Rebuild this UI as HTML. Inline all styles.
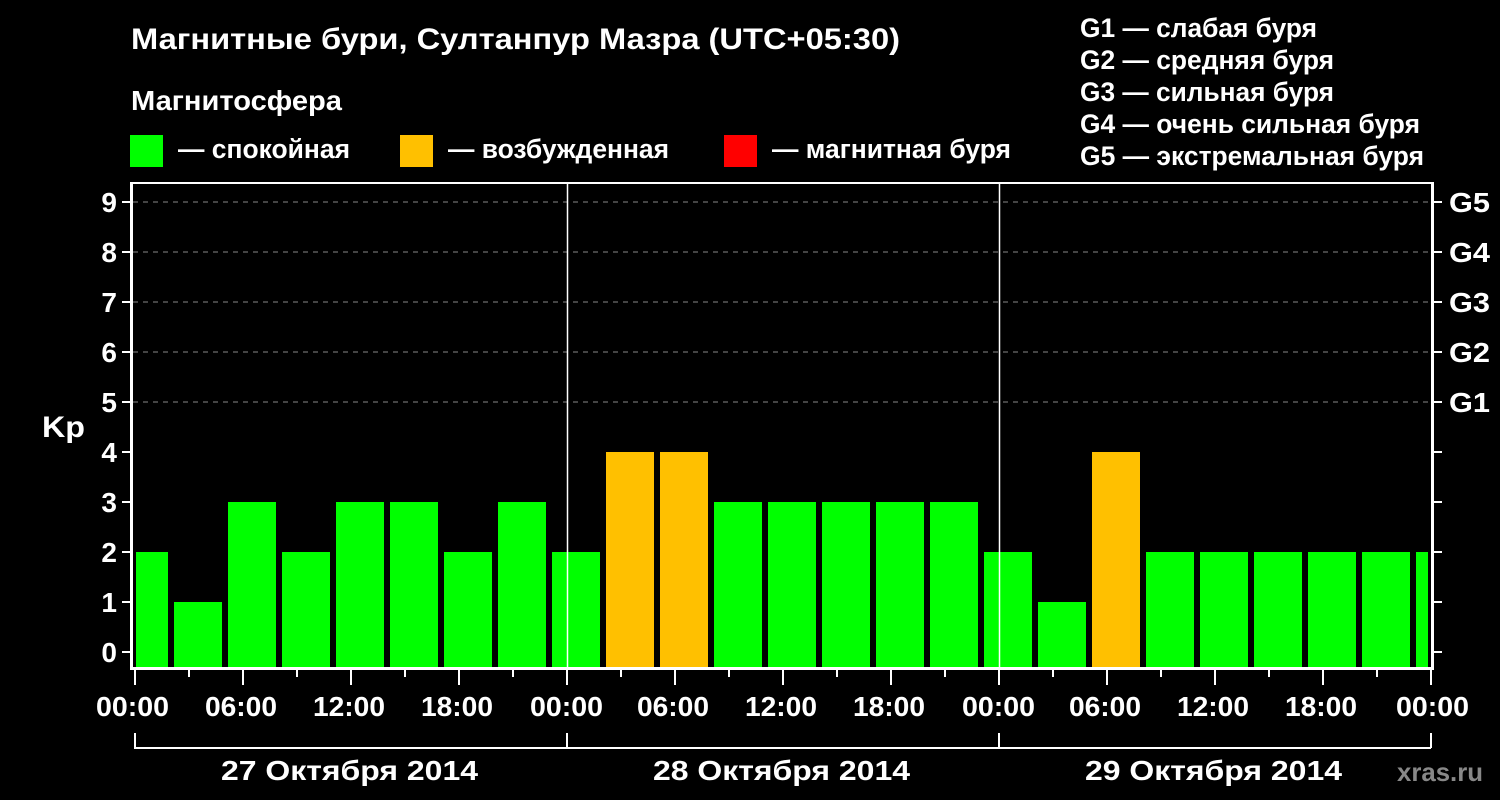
<!DOCTYPE html>
<html><head><meta charset="utf-8"><style>html,body{margin:0;padding:0;background:#000;}svg{display:block}text{font-family:"Liberation Sans",sans-serif;font-weight:bold;fill:#fff}</style></head>
<body>
<svg width="1500" height="800" viewBox="0 0 1500 800" xmlns="http://www.w3.org/2000/svg">
<rect width="1500" height="800" fill="#000"/>
<text x="131" y="49" font-size="30" textLength="769" lengthAdjust="spacingAndGlyphs">Магнитные бури, Султанпур Мазра (UTC+05:30)</text>
<text x="131" y="110" font-size="28" textLength="211" lengthAdjust="spacingAndGlyphs">Магнитосфера</text>
<rect x="130" y="135" width="33" height="32" fill="#00ff00"/>
<text x="178" y="158" font-size="27" textLength="172" lengthAdjust="spacingAndGlyphs">— спокойная</text>
<rect x="400" y="135" width="33" height="32" fill="#ffc000"/>
<text x="448" y="158" font-size="27" textLength="221" lengthAdjust="spacingAndGlyphs">— возбужденная</text>
<rect x="724" y="135" width="33" height="32" fill="#ff0000"/>
<text x="772" y="158" font-size="27" textLength="239" lengthAdjust="spacingAndGlyphs">— магнитная буря</text>
<g font-size="27">
<text x="1080" y="37" textLength="237" lengthAdjust="spacingAndGlyphs">G1 — слабая буря</text>
<text x="1080" y="69" textLength="254" lengthAdjust="spacingAndGlyphs">G2 — средняя буря</text>
<text x="1080" y="101" textLength="254" lengthAdjust="spacingAndGlyphs">G3 — сильная буря</text>
<text x="1080" y="133" textLength="340" lengthAdjust="spacingAndGlyphs">G4 — очень сильная буря</text>
<text x="1080" y="165" textLength="344" lengthAdjust="spacingAndGlyphs">G5 — экстремальная буря</text>
</g>
<g stroke="#888" stroke-width="1" stroke-dasharray="5,5">
<line x1="133" y1="202" x2="1432" y2="202"/><line x1="133" y1="252" x2="1432" y2="252"/><line x1="133" y1="302" x2="1432" y2="302"/><line x1="133" y1="352" x2="1432" y2="352"/><line x1="133" y1="402" x2="1432" y2="402"/>
</g>
<g>
<rect x="136" y="552" width="32" height="116" fill="#00ff00"/>
<rect x="174" y="602" width="48" height="66" fill="#00ff00"/>
<rect x="228" y="502" width="48" height="166" fill="#00ff00"/>
<rect x="282" y="552" width="48" height="116" fill="#00ff00"/>
<rect x="336" y="502" width="48" height="166" fill="#00ff00"/>
<rect x="390" y="502" width="48" height="166" fill="#00ff00"/>
<rect x="444" y="552" width="48" height="116" fill="#00ff00"/>
<rect x="498" y="502" width="48" height="166" fill="#00ff00"/>
<rect x="552" y="552" width="48" height="116" fill="#00ff00"/>
<rect x="606" y="452" width="48" height="216" fill="#ffc000"/>
<rect x="660" y="452" width="48" height="216" fill="#ffc000"/>
<rect x="714" y="502" width="48" height="166" fill="#00ff00"/>
<rect x="768" y="502" width="48" height="166" fill="#00ff00"/>
<rect x="822" y="502" width="48" height="166" fill="#00ff00"/>
<rect x="876" y="502" width="48" height="166" fill="#00ff00"/>
<rect x="930" y="502" width="48" height="166" fill="#00ff00"/>
<rect x="984" y="552" width="48" height="116" fill="#00ff00"/>
<rect x="1038" y="602" width="48" height="66" fill="#00ff00"/>
<rect x="1092" y="452" width="48" height="216" fill="#ffc000"/>
<rect x="1146" y="552" width="48" height="116" fill="#00ff00"/>
<rect x="1200" y="552" width="48" height="116" fill="#00ff00"/>
<rect x="1254" y="552" width="48" height="116" fill="#00ff00"/>
<rect x="1308" y="552" width="48" height="116" fill="#00ff00"/>
<rect x="1362" y="552" width="48" height="116" fill="#00ff00"/>
<rect x="1416" y="552" width="12" height="116" fill="#00ff00"/>
</g>
<g stroke="#fff" fill="none">
<line x1="131" y1="183" x2="1434" y2="183" stroke-width="2"/>
<line x1="131.5" y1="182" x2="131.5" y2="670" stroke-width="3"/>
<line x1="1432.5" y1="182" x2="1432.5" y2="670" stroke-width="3"/>
<line x1="130" y1="668.5" x2="1434" y2="668.5" stroke-width="3"/>
<line x1="567.5" y1="183" x2="567.5" y2="668" stroke-width="1.5"/>
<line x1="999.5" y1="183" x2="999.5" y2="668" stroke-width="1.5"/>
<g stroke-width="2">
<path d="M122 202H131M122 252H131M122 302H131M122 352H131M122 402H131M122 452H131M122 502H131M122 552H131M122 602H131M122 652H131"/>
<path d="M1433 202H1442M1433 252H1442M1433 302H1442M1433 352H1442M1433 402H1442M1433 452H1442M1433 502H1442M1433 552H1442M1433 602H1442M1433 652H1442"/>
<path d="M135 668V685M243 668V685M351 668V685M459 668V685M567 668V685M675 668V685M783 668V685M891 668V685M999 668V685M1107 668V685M1215 668V685M1323 668V685M1431 668V685"/>
<path d="M189 668V677M297 668V677M405 668V677M513 668V677M621 668V677M729 668V677M837 668V677M945 668V677M1053 668V677M1161 668V677M1269 668V677M1377 668V677"/>
<path d="M135 733V748H1431M1431 733V748M567 733V748M999 733V748"/>
</g>
</g>
<g font-size="28" text-anchor="end">
<text x="117" y="212">9</text><text x="117" y="262">8</text><text x="117" y="312">7</text><text x="117" y="362">6</text><text x="117" y="412">5</text><text x="117" y="462">4</text><text x="117" y="512">3</text><text x="117" y="562">2</text><text x="117" y="612">1</text><text x="117" y="662">0</text>
</g>
<text x="42" y="437" font-size="30" textLength="43" lengthAdjust="spacingAndGlyphs">Kp</text>
<g font-size="28">
<text x="1449" y="212" textLength="41" lengthAdjust="spacingAndGlyphs">G5</text><text x="1449" y="262" textLength="41" lengthAdjust="spacingAndGlyphs">G4</text><text x="1449" y="312" textLength="41" lengthAdjust="spacingAndGlyphs">G3</text><text x="1449" y="362" textLength="41" lengthAdjust="spacingAndGlyphs">G2</text><text x="1449" y="412" textLength="41" lengthAdjust="spacingAndGlyphs">G1</text>
</g>
<g font-size="28">
<text x="96" y="716" textLength="73" lengthAdjust="spacingAndGlyphs">00:00</text><text x="205" y="716" textLength="72" lengthAdjust="spacingAndGlyphs">06:00</text><text x="313" y="716" textLength="72" lengthAdjust="spacingAndGlyphs">12:00</text><text x="421" y="716" textLength="72" lengthAdjust="spacingAndGlyphs">18:00</text><text x="530" y="716" textLength="73" lengthAdjust="spacingAndGlyphs">00:00</text><text x="637" y="716" textLength="72" lengthAdjust="spacingAndGlyphs">06:00</text><text x="745" y="716" textLength="72" lengthAdjust="spacingAndGlyphs">12:00</text><text x="853" y="716" textLength="72" lengthAdjust="spacingAndGlyphs">18:00</text><text x="962" y="716" textLength="73" lengthAdjust="spacingAndGlyphs">00:00</text><text x="1069" y="716" textLength="72" lengthAdjust="spacingAndGlyphs">06:00</text><text x="1177" y="716" textLength="72" lengthAdjust="spacingAndGlyphs">12:00</text><text x="1285" y="716" textLength="72" lengthAdjust="spacingAndGlyphs">18:00</text><text x="1396" y="716" textLength="73" lengthAdjust="spacingAndGlyphs">00:00</text>
<text x="221" y="780" textLength="257" lengthAdjust="spacingAndGlyphs">27 Октября 2014</text><text x="653" y="780" textLength="257" lengthAdjust="spacingAndGlyphs">28 Октября 2014</text><text x="1085" y="780" textLength="257" lengthAdjust="spacingAndGlyphs">29 Октября 2014</text>
</g>
<text x="1397" y="781" font-size="26" style="fill:#888" textLength="86" lengthAdjust="spacingAndGlyphs">xras.ru</text>
</svg>
</body></html>
